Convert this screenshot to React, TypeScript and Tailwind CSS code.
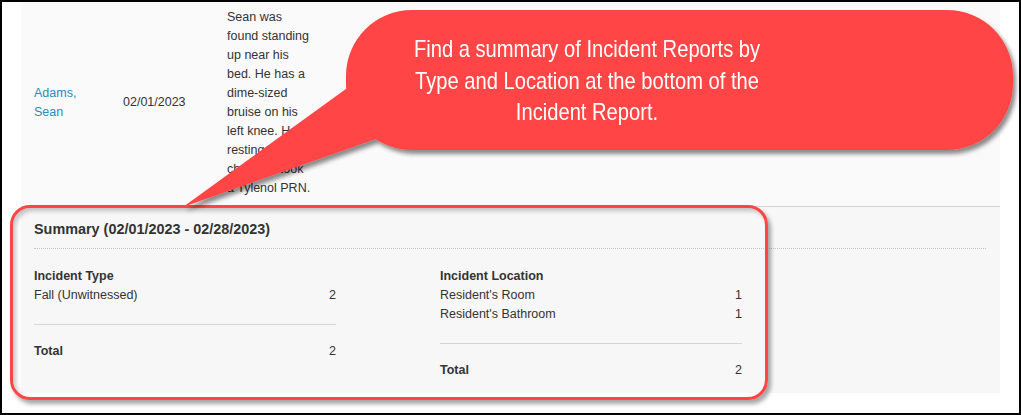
import React from "react";

function Callout() {
  return (
    <svg
      className="absolute left-[-2px] top-[-2px] pointer-events-none"
      width={1021}
      height={415}
      viewBox="0 0 1021 415"
    >
      <defs>
        <filter id="sh" x="-10%" y="-10%" width="130%" height="140%">
          <feDropShadow dx="3" dy="4" stdDeviation="2.2" floodColor="#000" floodOpacity="0.45" />
        </filter>
      </defs>
      <g filter="url(#sh)" fill="#ff4545">
        <rect x="346" y="10" width="667" height="140" rx="66" ry="66" />
        <polygon points="183,207 350,86 376,139" />
      </g>
    </svg>
  );
}

export default function App() {
  const body = "text-[12.5px] leading-[19px] text-[#333]";
  return (
    <div
      className="relative w-[1021px] h-[415px] border-2 border-black bg-white overflow-hidden"
      style={{ fontFamily: '"Liberation Sans", Arial, sans-serif' }}
    >
      <div className="ml-[19px] w-[979px]">
        {/* table row */}
        <div className={`flex items-center h-[205px] pb-[3px] pl-[13px] bg-[#fafafa] border-b border-[#d6d6d6] ${body}`}>
          <div className="w-[89px] text-[#268bc0]">
            <div>Adams,</div>
            <div>Sean</div>
          </div>
          <div className="w-[104px]">02/01/2023</div>
          <div className="w-[96px]">
            <div>Sean was</div>
            <div>found standing</div>
            <div>up near his</div>
            <div>bed. He has a</div>
            <div>dime-sized</div>
            <div>bruise on his</div>
            <div>left knee. He is</div>
            <div>resting in his</div>
            <div>chair. He took</div>
            <div>a Tylenol PRN.</div>
          </div>
        </div>

        {/* summary */}
        <div className={`h-[186px] bg-[#f7f7f7] pl-[13px] pr-[14px] pt-[13px] ${body}`}>
          <div className="text-[14.4px] font-bold leading-[19px] pb-[9px] border-b border-dotted border-[#c4c4c4]">
            Summary (02/01/2023 - 02/28/2023)
          </div>
          <div className="flex gap-[104px] mt-[18px]">
            <div className="w-[302px]">
              <div className="font-bold">Incident Type</div>
              <div className="flex justify-between">
                <span>Fall (Unwitnessed)</span>
                <span>2</span>
              </div>
              <div className="mt-[19px] border-t border-[#d6d6d6]" />
              <div className="mt-[17px] flex justify-between">
                <span className="font-bold">Total</span>
                <span>2</span>
              </div>
            </div>
            <div className="w-[302px]">
              <div className="font-bold">Incident Location</div>
              <div className="flex justify-between">
                <span>Resident's Room</span>
                <span>1</span>
              </div>
              <div className="flex justify-between">
                <span>Resident's Bathroom</span>
                <span>1</span>
              </div>
              <div className="mt-[19px] border-t border-[#d6d6d6]" />
              <div className="mt-[17px] flex justify-between">
                <span className="font-bold">Total</span>
                <span>2</span>
              </div>
            </div>
          </div>
        </div>
      </div>

      {/* red outline around summary */}
      <div className="absolute left-[8px] top-[203px] w-[758px] h-[195px] rounded-[20px] border-[3px] border-[#ff4545] shadow-[3px_4px_4px_rgba(0,0,0,0.35),inset_3px_3px_4px_rgba(0,0,0,0.22)] pointer-events-none" />

      <Callout />

      <div className="absolute left-[335px] top-[31px] w-[500px] text-center text-white text-[24px] leading-[31.5px] scale-x-[0.84]">
        <div>Find a summary of Incident Reports by</div>
        <div>Type and Location at the bottom of the</div>
        <div>Incident Report.</div>
      </div>
    </div>
  );
}
